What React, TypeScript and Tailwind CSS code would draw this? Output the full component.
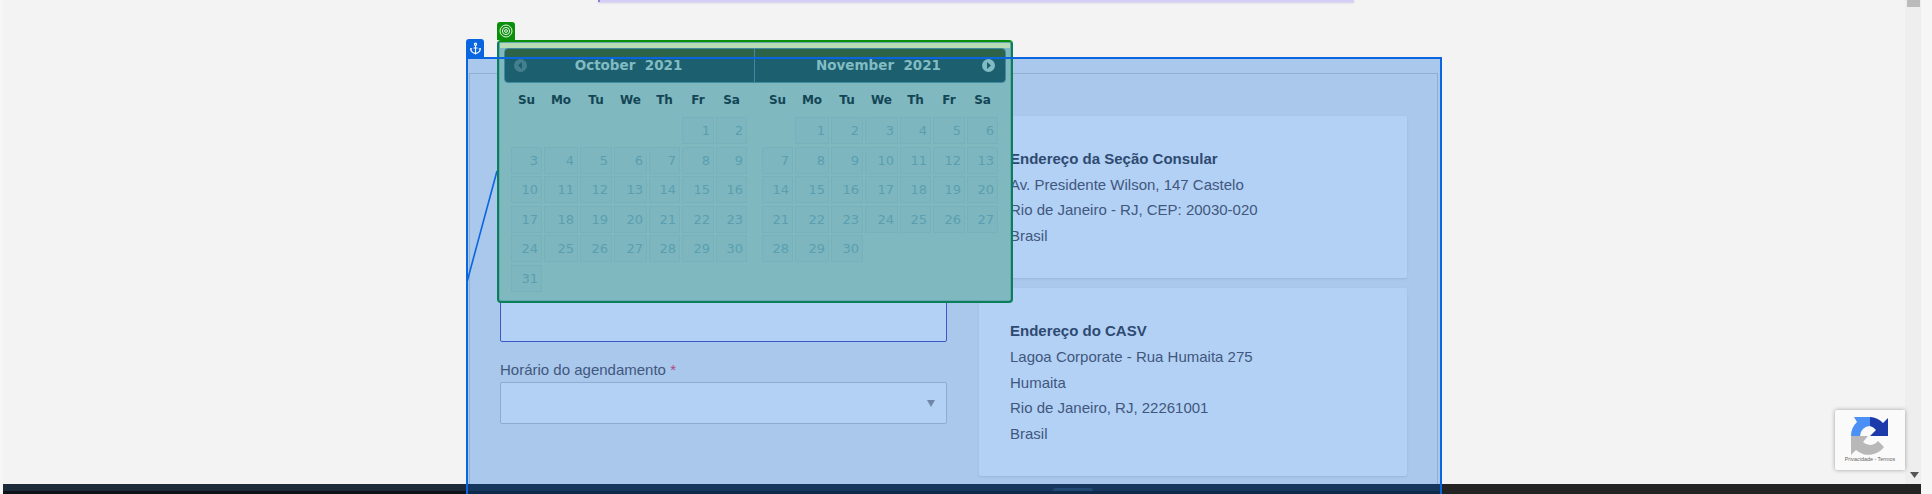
import { Anchor } from "lucide-react";

const NAMES = ["Su", "Mo", "Tu", "We", "Th", "Fr", "Sa"];

function Month({ offset, days }: { offset: number; days: number }) {
  const blanks = Array.from({ length: offset });
  const list = Array.from({ length: days }, (_, i) => i + 1);
  return (
    <div className="w-[236px]">
      <div className="grid h-[34px] grid-cols-[31px_34px_32px_33px_31px_32px_31px] items-center gap-x-[2px]">
        {NAMES.map((n) => (
          <span key={n} className="text-center text-[12px] font-bold text-[#134555]">
            {n}
          </span>
        ))}
      </div>
      <div className="grid grid-cols-[31px_34px_32px_33px_31px_32px_31px] auto-rows-[27px] gap-x-[2px] gap-y-[2.5px]">
        {blanks.map((_, i) => (
          <span key={i} />
        ))}
        {list.map((d) => (
          <span
            key={d}
            className="border border-[#77b1bb] bg-[#7db6be] pr-[3px] text-right text-[13px] leading-[25px] text-[#5a9fb1]"
          >
            {d}
          </span>
        ))}
      </div>
    </div>
  );
}

function NavIcon({ dir, color }: { dir: "l" | "r"; color: string }) {
  return (
    <svg width="13" height="13" viewBox="0 0 13 13" className="shrink-0">
      <circle cx="6.5" cy="6.5" r="6.5" fill={color} />
      <path d={dir === "l" ? "M8 3 L4 6.5 L8 10 Z" : "M5 3 L9 6.5 L5 10 Z"} fill="#1c5f6f" />
    </svg>
  );
}

function Calendar() {
  return (
    <div className="absolute left-[497px] top-[40px] z-20 h-[263px] w-[516px] rounded-[4px] border-2 border-[#0a8058] border-t-[#0a8f0a] bg-[linear-gradient(#b8dcb4_0_6px,#7fb8bf_6px)] px-[5px] pt-[6px] shadow-[inset_0_0_0_1px_#6aa5b5]">
      <div className="flex h-[35px] w-[502px] rounded-[4px] border border-[#3f8aa3] bg-[linear-gradient(#2d6449_0_9px,#1c5f6f_9px)] font-['DejaVu_Sans',sans-serif] text-[13.5px] font-bold text-[#82bcc3]">
        <div className="flex w-[250px] items-center border-r border-[#3f8aa3] pl-[9px]">
          <NavIcon dir="l" color="#447f8e" />
          <span className="flex-1 whitespace-pre pr-[24px] text-center">October  2021</span>
        </div>
        <div className="flex flex-1 items-center pr-[10px]">
          <span className="flex-1 whitespace-pre pl-[20px] text-center">November  2021</span>
          <NavIcon dir="r" color="#82bcc3" />
        </div>
      </div>
      <div className="ml-[7px] flex gap-[15px] font-['DejaVu_Sans',sans-serif]">
        <Month offset={5} days={31} />
        <Month offset={1} days={30} />
      </div>
    </div>
  );
}

function TargetIcon() {
  return (
    <svg width="14" height="14" viewBox="0 0 14 14" fill="none" stroke="#e8f5e8">
      <circle cx="7" cy="7" r="6" strokeWidth="1" />
      <circle cx="7" cy="7" r="3.6" strokeWidth="1" />
      <circle cx="7" cy="7" r="1.4" strokeWidth="1" />
    </svg>
  );
}

function Recaptcha() {
  return (
    <div className="absolute left-[1835px] top-[410px] z-10 flex h-[60px] w-[70px] flex-col items-center rounded-l-[2px] bg-[#fafafa] pt-[7px] shadow-[0_0_4px_rgba(0,0,0,0.35)]">
      <svg width="38" height="40" viewBox="0 0 38 40">
        <path d="M19 0 L19 9 A10 10 0 0 0 9 19 L0 19 A19 19 0 0 1 6 5 L3 0 Z" fill="#4a90f5" />
        <path d="M19 0 A19 19 0 0 1 32 6 L37 1 L37 19 L19 19 L25 13 A10 10 0 0 0 19 9 Z" fill="#1c3aa9" />
        <path d="M0 19 L17 19 L12 25 A10 10 0 0 0 27 24 L33 30 A19 19 0 0 1 5 33 L0 38 Z" fill="#b8b8b8" />
      </svg>
      <span className="-mt-[1px] whitespace-nowrap font-['Liberation_Sans',sans-serif] text-[5.4px] leading-[7px] text-[#666666]">
        Privacidade - Termos
      </span>
    </div>
  );
}

function Card({ title, lines }: { title: string; lines: string[] }) {
  return (
    <div className="rounded-[2px] bg-[#b2d1f5] px-[31px] py-[30px] shadow-[0_1px_2px_rgba(60,90,130,0.15)]">
      <div className="text-[15px] font-bold leading-[25.6px] text-[#2f4a70]">{title}</div>
      {lines.map((l) => (
        <div key={l} className="text-[15px] leading-[25.6px] text-[#41577d]">
          {l}
        </div>
      ))}
    </div>
  );
}

export default function App() {
  return (
    <div className="relative flex h-[494px] w-[1932px] overflow-hidden bg-[#f6f6f6] pl-[3px] pr-[11px] font-['Liberation_Sans',sans-serif]">
      <div className="h-full flex-1 bg-[#f3f3f3]">
        <div className="ml-[595px] h-[2px] w-[756px] border-l-2 border-[#8a7fe0] bg-[#d5cdf5] shadow-[0_1px_2px_rgba(120,110,200,0.3)]" />
        <div className="relative ml-[463px] mt-[55px] h-[437px] w-[976px] border-x-2 border-t-2 border-[#0a66e0] bg-[#a9c8ec]">
          <div className="mx-[1px] mr-[2px] mt-[14px] flex h-[440px] gap-[32px] border border-[#8fb0cf] pl-[30px] pt-[42px]">
            <div className="w-[447px] shrink-0">
              <div className="mt-[184px] h-[42px] rounded-[2px] border border-[#3f58c8] bg-[#b2d1f5]" />
              <div className="mt-[18px] h-[22px] text-[15px] leading-[20px] text-[#41577d]">
                Horário do agendamento <span className="text-[#b04a80]">*</span>
              </div>
              <div className="flex h-[42px] items-center justify-end rounded-[2px] border border-[#8fabd0] bg-[#b2d1f5] pr-[11px]">
                <svg width="8" height="7" viewBox="0 0 8 7">
                  <path d="M0 0 H8 L4 7 Z" fill="#6f86a8" />
                </svg>
              </div>
            </div>
            <div className="flex w-[428px] shrink-0 flex-col gap-[10px]">
              <Card
                title="Endereço da Seção Consular"
                lines={["Av. Presidente Wilson, 147 Castelo", "Rio de Janeiro - RJ, CEP: 20030-020", "Brasil"]}
              />
              <Card
                title="Endereço do CASV"
                lines={["Lagoa Corporate - Rua Humaita 275", "Humaita", "Rio de Janeiro, RJ, 22261001", "Brasil"]}
              />
            </div>
          </div>
          <div className="absolute inset-x-0 bottom-0 h-[10px] border-b-[3px] border-[#0e2a4a] bg-[#16365e]">
            <div className="ml-[585px] mt-[4px] h-[3px] w-[40px] rounded-t-[3px] bg-[#234a75]" />
          </div>
        </div>
      </div>
      <div className="relative h-full w-[16px] bg-[#eeeeee]">
        <div className="ml-[2px] h-[7px] w-[13px] bg-[#bbbbbb]" />
      </div>

      <div className="absolute bottom-0 left-[3px] h-[10px] w-[463px] border-b-[3px] border-[#0e1116] bg-[#1d2a3a]" />
      <div className="absolute bottom-0 left-[1442px] h-[10px] w-[479px] bg-[#232323]" />
      <svg className="absolute left-[1910px] top-[472px]" width="9" height="6" viewBox="0 0 9 6">
        <path d="M0 0 H9 L4.5 6 Z" fill="#555555" />
      </svg>

      <svg className="absolute left-[464px] top-[168px] z-10" width="36" height="118" viewBox="0 0 36 118">
        <path d="M33 3 L3 114" stroke="#0a66e0" strokeWidth="1.6" fill="none" />
      </svg>

      <div className="absolute left-[466px] top-[39px] flex h-[18px] w-[18px] items-center justify-center rounded-t-[3px] bg-[#0a66e0] text-white">
        <Anchor size={13} strokeWidth={2} />
      </div>
      <div className="absolute left-[497px] top-[22px] flex h-[18px] w-[18px] items-center justify-center rounded-t-[3px] bg-[#0a8f0a]">
        <TargetIcon />
      </div>

      <Calendar />
      <div className="absolute left-[466px] top-[57px] z-30 h-[2px] w-[976px] bg-[#0a66e0]" />
      <Recaptcha />
    </div>
  );
}
